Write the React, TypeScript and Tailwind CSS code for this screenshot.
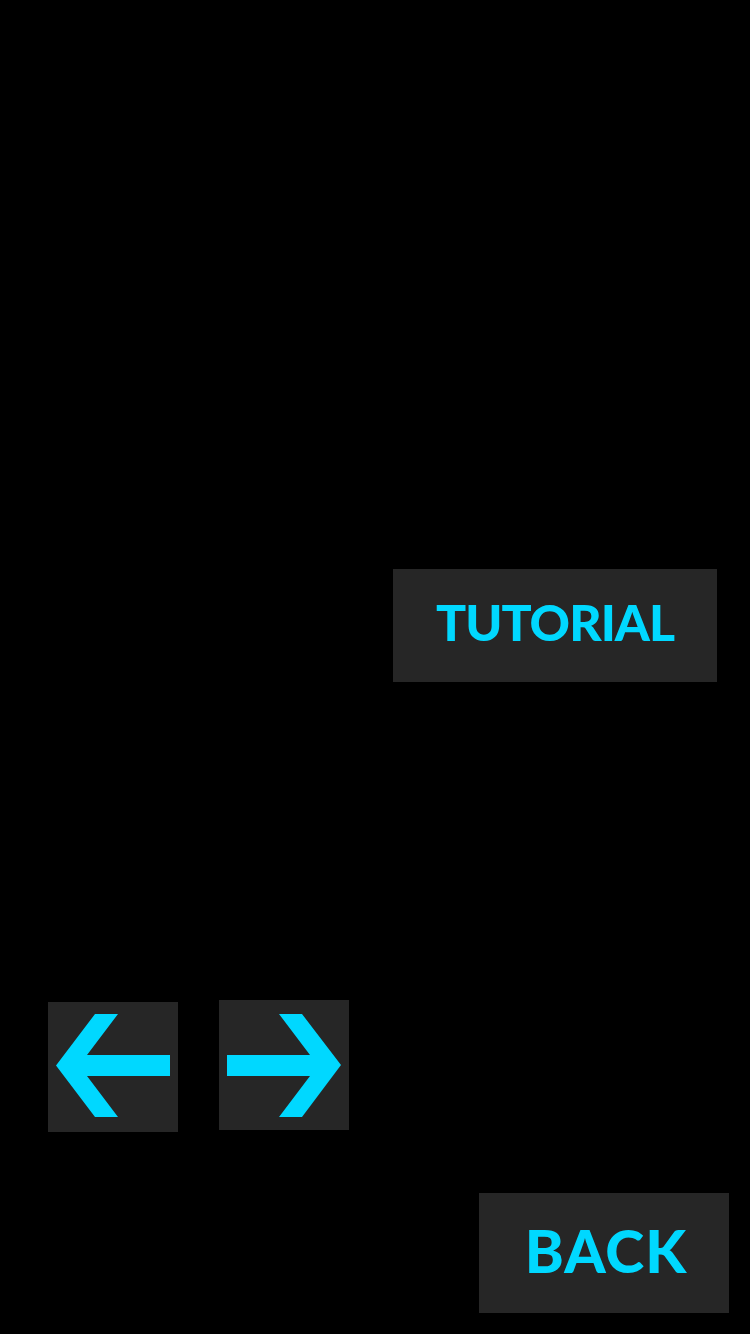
import React from 'react'

const font = { fontFamily: 'Lato, "Noto Sans", sans-serif' }

function LeftArrow() {
  return (
    <svg width="130" height="130" viewBox="0 0 130 130">
      <polygon
        points="8,63.5 47,12 70,12 39,53 122,53 122,74 39,74 70,115 47,115"
        fill="#00d8ff"
      />
    </svg>
  )
}

function RightArrow() {
  return (
    <svg width="130" height="130" viewBox="0 0 130 130">
      <polygon
        points="122,65 83,14 60,14 91,55 8,55 8,76 91,76 60,117 83,117"
        fill="#00d8ff"
      />
    </svg>
  )
}

export default function App() {
  return (
    <div className="flex h-[1334px] w-[750px] flex-col bg-black" style={font}>
      <div className="mt-[569px] flex justify-end pr-[33px]">
        <button className="flex h-[113px] w-[324px] items-center justify-center bg-[#262626] pb-[7px] text-[50px] font-black leading-none tracking-[-1px] text-[#00d8ff]">
          TUTORIAL
        </button>
      </div>

      <div className="mt-[318px] flex items-start gap-[41px] pl-[48px]">
        <button className="mt-[2px] h-[130px] w-[130px] bg-[#262626]">
          <LeftArrow />
        </button>
        <button className="h-[130px] w-[130px] bg-[#262626]">
          <RightArrow />
        </button>
      </div>

      <div className="mt-[61px] flex justify-end pr-[21px]">
        <button className="flex h-[120px] w-[250px] items-center justify-center bg-[#262626] pb-[6px] pl-[4px] text-[59px] font-black leading-none tracking-[1px] text-[#00d8ff]">
          BACK
        </button>
      </div>
    </div>
  )
}
